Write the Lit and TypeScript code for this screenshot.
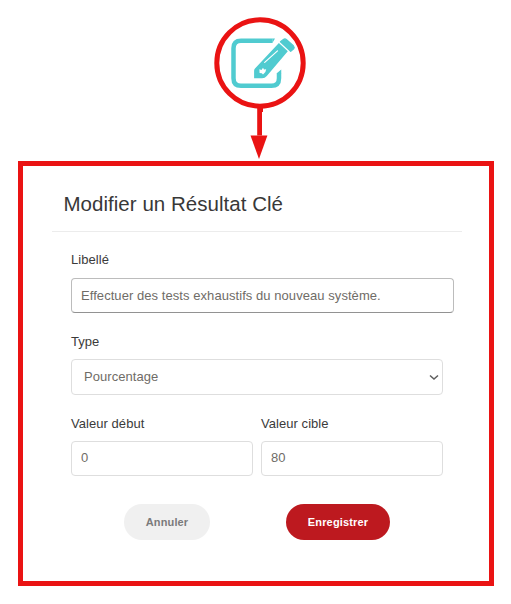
import { LitElement, html, css } from "lit";
import { customElement } from "lit/decorators.js";

@customElement("app-root")
class AppRoot extends LitElement {
  static styles = css`
    :host {
      display: block;
      width: 511px;
      height: 604px;
      overflow: hidden;
      background: #fff;
      font-family: "Liberation Sans", Arial, sans-serif;
      font-size: 13px;
      color: #3b3b3b;
    }
    * { box-sizing: border-box; }
    .callout { display: block; width: 511px; height: 161px; }
    .dialog {
      width: 476px;
      height: 425px;
      margin-left: 18px;
      border: 5px solid #ea1313;
      padding: 0 27px 0 29px;
    }
    h1 {
      margin: 0;
      height: 66px;
      padding: 25px 0 0 11.5px;
      border-bottom: 1px solid #ececec;
      font-size: 20.5px;
      line-height: 26px;
      font-weight: 400;
      letter-spacing: 0.03px;
      white-space: nowrap;
      color: #383838;
    }
    form { padding: 19px 0 0 19px; }
    .field { display: flex; flex-direction: column; width: 372px; height: 82px; }
    .row { display: flex; gap: 8px; }
    .row .field { width: 182px; height: 89px; }
    label { height: 27px; line-height: 18px; letter-spacing: 0.05px; }
    .narrow label, .row label { height: 26px; }
    input, select {
      font: inherit;
      letter-spacing: 0.06px;
      margin: 0;
      height: 35px;
      border: 1px solid #dedede;
      border-radius: 4px;
      padding: 0 9px;
      background: #fff;
      color: #6f6c67;
      outline: none;
    }
    .row input { padding-bottom: 2px; }
    .wide { width: 383px; border-color: #bcbcbc #bcbcbc #929292; }
    .pick { position: relative; height: 36px; }
    select { appearance: none; width: 100%; height: 36px; padding: 0 12px 1px; }
    .chevron { position: absolute; right: 4px; top: 15px; width: 10px; height: 7px; }
    .actions { display: flex; gap: 76px; padding-left: 53px; }
    button {
      height: 36px;
      border: 0;
      border-radius: 18px;
      padding: 0;
      font: bold 11px "Liberation Sans", Arial, sans-serif;
      letter-spacing: 0.15px;
    }
    .cancel { width: 86px; background: #f0f0f0; color: #7b7b7b; }
    .save { width: 104px; background: #bd191f; color: #fff; }
  `;

  render() {
    return html`
      <svg class="callout" viewBox="0 0 511 161">
        <circle cx="260" cy="63" r="43.2" fill="#fff" stroke="#ea1313" stroke-width="5" />
        <path d="M272.5 40.7H241Q233.5 40.7 233.5 48.2V78.3Q233.5 85.8 241 85.8H271.5Q279 85.8 279 78.3V73" fill="none" stroke="#50cbd0" stroke-width="4.5" />
        <path d="M272.4 38.45H275L272.4 42.95ZM276.75 73.2L281.25 69.5V73.2Z" fill="#50cbd0" />
        <path d="M278.9 43L287.8 51.2L266.8 76Q265 78.2 262 78.2H254.1V70.7Q254.1 69.6 255 68.6Z" fill="#50cbd0" />
        <path d="M280.4 41.8L283.4 39.4Q285 38.3 286.6 39.7L293.4 45.8Q294.9 47.3 293.7 48.8L290.7 51.4Z" fill="#50cbd0" stroke="#50cbd0" stroke-width="1.2" stroke-linejoin="round" />
        <path d="M264.7 62.4L277.5 50.9" stroke="#fff" stroke-width="1.2" stroke-linecap="round" />
        <path d="M259.4 69.2L261.5 70L263 67.8L264 69.6L266.2 69.3L265.4 72L263 74.5L261.8 73.2L259.6 73Z" fill="#fff" />
        <path d="M257.2 108H263V112H262V135.5H257.2Z" fill="#ea1313" />
        <path d="M250.5 135.5H267.4L259 159Z" fill="#ea1313" />
      </svg>
      <section class="dialog">
        <h1>Modifier un Résultat Clé</h1>
        <form>
          <div class="field">
            <label for="title">Libellé</label>
            <input class="wide" id="title" value="Effectuer des tests exhaustifs du nouveau système." />
          </div>
          <div class="field narrow">
            <label for="kind">Type</label>
            <div class="pick">
              <select id="kind"><option>Pourcentage</option></select>
              <svg class="chevron" viewBox="0 0 10 7"><path d="M1 1.5L5 5L9 1.5" fill="none" stroke="#5e5e5e" stroke-width="1.5" /></svg>
            </div>
          </div>
          <div class="row">
            <div class="field"><label for="start">Valeur début</label><input id="start" value="0" /></div>
            <div class="field"><label for="target">Valeur cible</label><input id="target" value="80" /></div>
          </div>
          <div class="actions">
            <button class="cancel" type="button">Annuler</button>
            <button class="save" type="button">Enregistrer</button>
          </div>
        </form>
      </section>
    `;
  }
}
